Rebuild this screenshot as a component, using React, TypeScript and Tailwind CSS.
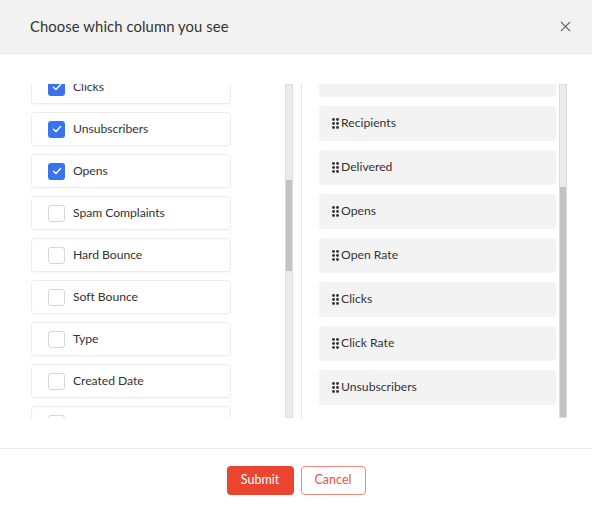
import { X } from 'lucide-react';

const leftItems = [
  { label: 'Clicks', checked: true },
  { label: 'Unsubscribers', checked: true },
  { label: 'Opens', checked: true },
  { label: 'Spam Complaints', checked: false },
  { label: 'Hard Bounce', checked: false },
  { label: 'Soft Bounce', checked: false },
  { label: 'Type', checked: false },
  { label: 'Created Date', checked: false },
  { label: 'Groups', checked: false },
];

const rightItems = ['', 'Recipients', 'Delivered', 'Opens', 'Open Rate', 'Clicks', 'Click Rate', 'Unsubscribers'];

function Grip() {
  return (
    <svg width="7" height="11" viewBox="0 0 7 11" className="shrink-0">
      {[1.5, 5.5, 9.5].map((y) =>
        [1.5, 5.5].map((x) => <circle key={`${x}-${y}`} cx={x} cy={y} r="1.45" fill="#333" />)
      )}
    </svg>
  );
}

function Check() {
  return (
    <svg width="10" height="8" viewBox="0 0 10 8" fill="none">
      <path d="M1.5 4.2 L4 6.5 L8.6 1.5" stroke="white" strokeWidth="1.4" strokeLinecap="round" strokeLinejoin="round" />
    </svg>
  );
}

function Scrollbar({ top, height }: { top: number; height: number }) {
  return (
    <div className="w-[8px] h-full bg-[#ebebeb] border border-[#dcdcdc] flex flex-col">
      <div className="w-full bg-[#c3c3c3]" style={{ marginTop: top, height }} />
    </div>
  );
}

export default function App() {
  return (
    <div
      className="w-[592px] h-[508px] bg-white text-[#333] flex flex-col"
      style={{ fontFamily: 'Lato, "Open Sans", sans-serif' }}
    >
      {/* Header */}
      <div className="h-[54px] shrink-0 bg-[#f2f2f2] border-b border-[#e6e6e6] flex items-center justify-between pl-[30px] pr-[18px]">
        <h2 className="text-[14.8px] text-[#333] tracking-[0.1px]">Choose which column you see</h2>
        <X className="w-[17px] h-[17px] text-[#666]" strokeWidth={1.5} />
      </div>

      {/* Body */}
      <div className="flex pt-[30px] h-[364px] shrink-0">
        {/* Left column */}
        <div className="flex h-[334px] pl-[31px] pr-[8px]">
          <div className="w-[200px] overflow-hidden">
            <div className="flex flex-col gap-[8px] mt-[-14px]">
              {leftItems.map((item) => (
                <div
                  key={item.label}
                  className="h-[34px] shrink-0 flex items-center gap-[8px] pl-[16px] bg-white border border-[#ededed] rounded-[4px] shadow-[0_1px_2px_rgba(0,0,0,0.04)]"
                >
                  {item.checked ? (
                    <span className="w-[17px] h-[17px] rounded-[3px] bg-[#3a73ee] flex items-center justify-center">
                      <Check />
                    </span>
                  ) : (
                    <span className="w-[17px] h-[17px] rounded-[3px] bg-white border border-[#d6d6d6]" />
                  )}
                  <span className="text-[12.2px] tracking-[-0.05px]">{item.label}</span>
                </div>
              ))}
            </div>
          </div>
          <div className="ml-[54px]">
            <Scrollbar top={95} height={91} />
          </div>
        </div>

        {/* Divider */}
        <div className="w-px h-[334px] bg-[#e4e4e4]" />

        {/* Right column */}
        <div className="flex h-[334px] pl-[17px]">
          <div className="w-[237px] overflow-hidden">
            <div className="flex flex-col gap-[9px] mt-[-22px]">
              {rightItems.map((label, i) => (
                <div key={i} className="h-[35px] shrink-0 flex items-center gap-[2px] pl-[13px] bg-[#f3f3f3] rounded-[4px]">
                  {label && <Grip />}
                  {label && <span className="text-[12.2px]">{label}</span>}
                </div>
              ))}
            </div>
          </div>
          <div className="ml-[3px]">
            <Scrollbar top={102} height={230} />
          </div>
        </div>
      </div>

      {/* Footer */}
      <div className="border-t border-[#ececec] mt-[30px] flex justify-center gap-[7px] pt-[17px]">
        <button className="w-[67px] h-[29px] rounded-[4px] bg-[#e9452f] text-white text-[12.5px]">Submit</button>
        <button className="w-[65px] h-[29px] rounded-[4px] bg-white border border-[#ef8a7a] text-[#e8553f] text-[12.5px]">
          Cancel
        </button>
      </div>
    </div>
  );
}
